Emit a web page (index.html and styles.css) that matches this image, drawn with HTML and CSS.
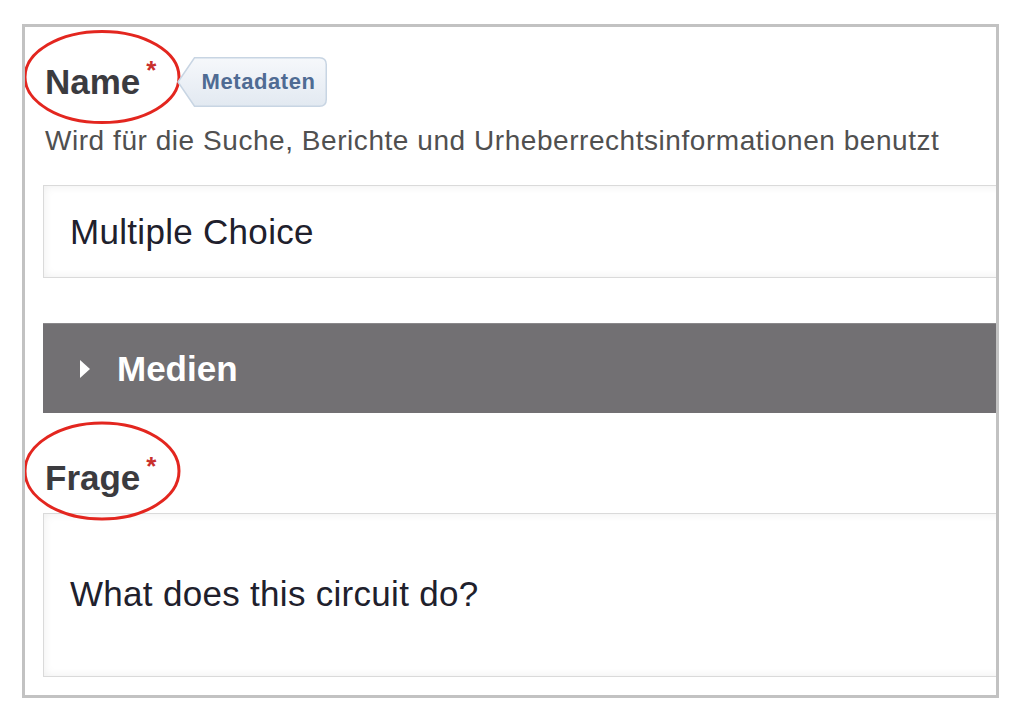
FILE: index.html
```html
<!DOCTYPE html>
<html lang="de">
<head>
<meta charset="utf-8">
<title>Multiple Choice</title>
<link rel="stylesheet" href="styles.css">
</head>
<body>
<div class="frame">
  <div class="content">
    <div class="label-row">
      <div class="label">
        <span class="label-text">Name</span><span class="req">*</span>
        <svg class="circle circle-name" width="160" height="96" viewBox="0 0 160 96"><ellipse cx="80" cy="48" rx="77" ry="45.5" fill="none" stroke="#e3261f" stroke-width="3"/></svg>
      </div>
      <div class="badge">
        <svg class="badge-bg" width="150" height="50" viewBox="0 0 150 50">
          <defs>
            <linearGradient id="bg" x1="0" y1="0" x2="0" y2="1">
              <stop offset="0" stop-color="#f6f8fb"/>
              <stop offset="1" stop-color="#e2e9f1"/>
            </linearGradient>
          </defs>
          <path d="M1 25 L17.5 0.75 H142.5 Q149.25 0.75 149.25 7.5 V42.5 Q149.25 49.25 142.5 49.25 H17.5 Z" fill="url(#bg)" stroke="#c8d5e3" stroke-width="1.5"/>
        </svg>
        <span class="badge-text">Metadaten</span>
      </div>
    </div>
    <div class="hint">Wird für die Suche, Berichte und Urheberrechtsinformationen benutzt</div>
    <div class="field field-name">Multiple Choice</div>

    <div class="section">
      <span class="arrow"></span>
      <span class="section-title">Medien</span>
    </div>

    <div class="label-row label-row-frage">
      <div class="label">
        <span class="label-text">Frage</span><span class="req">*</span>
        <svg class="circle circle-frage" width="160" height="100" viewBox="0 0 160 100"><ellipse cx="80" cy="50" rx="77" ry="48" fill="none" stroke="#e3261f" stroke-width="3"/></svg>
      </div>
    </div>
    <div class="field field-frage">What does this circuit do?</div>
  </div>
</div>
</body>
</html>
```
FILE: styles.css
```css
html, body {
  margin: 0;
  padding: 0;
  background: #ffffff;
}

body {
  font-family: "Liberation Sans", Arial, sans-serif;
}

.frame {
  margin: 24px 0 0 22px;
  width: 977px;
  height: 674px;
  box-sizing: border-box;
  border: 3px solid #c2c2c2;
  overflow: hidden;
  background: #ffffff;
}

.content {
  padding: 30px 0 0 18px;
  margin-right: -30px;
  display: flex;
  flex-direction: column;
}

.label-row {
  display: flex;
  align-items: center;
  height: 50px;
  gap: 21px;
  padding-left: 2px;
}

.label {
  position: relative;
  display: flex;
  align-items: flex-start;
}

.label-text {
  font-size: 35px;
  font-weight: bold;
  color: #3b3b3f;
  line-height: 40px;
}

.req {
  color: #c9302c;
  font-size: 26px;
  font-weight: bold;
  margin-left: 6px;
  line-height: 22px;
  margin-top: -3px;
}

.circle {
  position: absolute;
  pointer-events: none;
}

.circle-name {
  left: -23px;
  top: -33px;
}

.circle-frage {
  left: -23px;
  top: -37px;
}

.badge {
  position: relative;
  width: 150px;
  height: 50px;
  display: flex;
  align-items: center;
}

.badge-bg {
  position: absolute;
  left: 0;
  top: 0;
}

.badge-text {
  position: relative;
  margin-left: 24px;
  font-size: 22px;
  font-weight: bold;
  color: #4f6b93;
  letter-spacing: 0.6px;
}

.hint {
  margin-top: 18px;
  padding-left: 2px;
  font-size: 28px;
  line-height: 32px;
  color: #505050;
  letter-spacing: 0.55px;
  white-space: nowrap;
}

.field {
  background: #ffffff;
  border: 1px solid #dadada;
  box-shadow: inset 0 0 10px rgba(0, 0, 0, 0.07);
  box-sizing: border-box;
  padding-left: 26px;
  font-size: 35px;
  letter-spacing: 0.3px;
  color: #20202c;
  display: flex;
  align-items: center;
}

.field-name {
  margin-top: 28px;
  height: 93px;
}

.section {
  margin-top: 45px;
  height: 90px;
  background: #727073;
  border-top: 1px solid #8a888b;
  box-sizing: border-box;
  display: flex;
  align-items: center;
  padding-left: 37px;
}

.arrow {
  width: 0;
  height: 0;
  border-left: 10px solid #ffffff;
  border-top: 9px solid transparent;
  border-bottom: 9px solid transparent;
  margin-right: 27px;
}

.section-title {
  font-size: 35px;
  font-weight: bold;
  color: #ffffff;
}

.label-row-frage {
  margin-top: 30px;
  height: 70px;
}

.field-frage {
  margin-top: 0;
  height: 164px;
  padding-bottom: 3px;
}
```
